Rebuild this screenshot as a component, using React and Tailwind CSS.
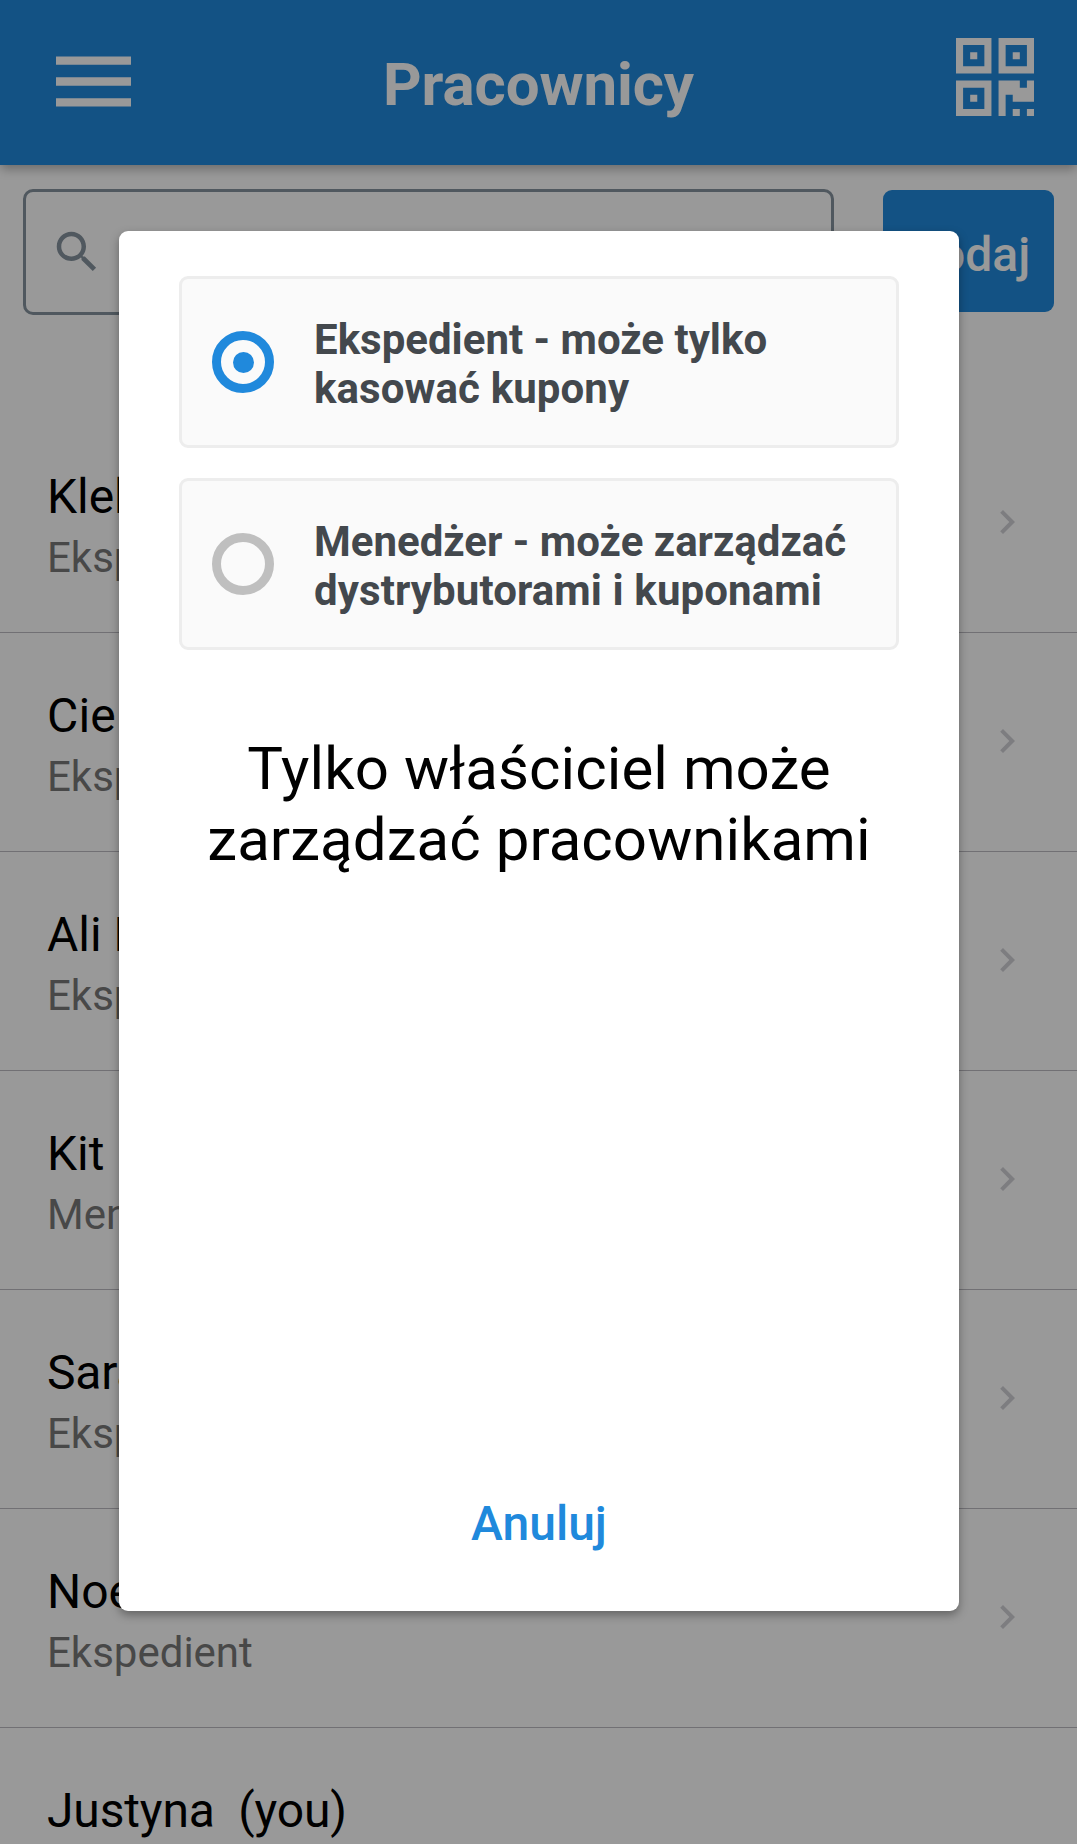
const employees = [
  { name: "Klebek", role: "Ekspedient" },
  { name: "Cielak", role: "Ekspedient", spacing: "tracking-[0.2px]" },
  { name: "Ali Baba", role: "Ekspedient" },
  { name: "Kit", role: "Menedżer" },
  { name: "Sara", role: "Ekspedient", spacing: "tracking-[-0.2px]" },
  { name: "Noe", role: "Ekspedient" },
  { name: "Justyna\u00a0 (you)", role: "\u00a0", own: true, spacing: "tracking-[-0.15px]" },
];

const options = [
  { lines: ["Ekspedient - może tylko", "kasować kupony"], checked: true },
  { lines: ["Menedżer - może zarządzać", "dystrybutorami i kuponami"], checked: false },
];

function MenuIcon() {
  return (
    <svg viewBox="-0.12 0.12 24 24" className="size-[100px] fill-white">
      <path d="M3 18h18v-2H3v2zm0-5h18v-2H3v2zm0-7v2h18V6H3z" />
    </svg>
  );
}

function QrIcon() {
  return (
    <svg viewBox="0 0 11 11" className="size-[78px] fill-white" fillRule="evenodd">
      <path d="M0 0h5v5H0zM1 1v3h3V1zM2 2h1v1H2z" />
      <path d="M6 0h5v5H6zM7 1v3h3V1zM8 2h1v1H8z" />
      <path d="M0 6h5v5H0zM1 7v3h3V7zM2 8h1v1H2z" />
      <path d="M6 6h3v1h1V6h1v3H8V8H7v3H6zM8 10h1v1H8zM10 10h1v1h-1z" />
    </svg>
  );
}

function SearchIcon() {
  return (
    <svg viewBox="0 0 24 24" className="size-[54px] fill-[#86939e]">
      <path d="M15.5 14h-.79l-.28-.27C15.41 12.59 16 11.11 16 9.5 16 5.91 13.09 3 9.5 3S3 5.91 3 9.5 5.91 16 9.5 16c1.61 0 3.09-.59 4.23-1.57l.27.28v.79l5 4.99L20.49 19l-4.99-5zm-6 0C7.01 14 5 11.99 5 9.5S7.01 5 9.5 5 14 7.01 14 9.5 11.99 14 9.5 14z" />
    </svg>
  );
}

function ChevronIcon() {
  return (
    <svg viewBox="0 0 24 24" className="mb-0.5 size-12 fill-[#d1d1d6]">
      <path d="M10 6L8.59 7.41 13.17 12l-4.58 4.59L10 18l6-6z" />
    </svg>
  );
}

function Radio({ checked }) {
  return checked ? (
    <span className="flex size-[62px] shrink-0 items-center justify-center rounded-full border-[9px] border-[#2089dc]">
      <span className="size-[21px] rounded-full bg-[#2089dc]" />
    </span>
  ) : (
    <span className="size-[62px] shrink-0 rounded-full border-[9px] border-[#bfbfbf]" />
  );
}

export default function App() {
  return (
    <div className="relative h-[1844px] w-[1077px] overflow-hidden bg-white font-['Roboto',sans-serif] text-black">
      <header className="relative flex h-[165px] items-start justify-between bg-[#2089dc] px-[43px] shadow-[0_5px_10px_-1px_rgba(0,0,0,0.3)]">
        <div className="flex w-[100px] pt-8"><MenuIcon /></div>
        <h1 className="pt-[49px] text-[60px] leading-[71px] font-bold tracking-[-0.1px] text-white">Pracownicy</h1>
        <div className="flex w-[100px] justify-end pt-[38px]"><QrIcon /></div>
      </header>

      <div className="flex h-[249px] items-start justify-between px-[23px] pt-6">
        <div className="flex h-[126px] w-[811px] items-center rounded-[10px] border-[3px] border-[#86939e] pl-6">
          <SearchIcon />
        </div>
        <button className="mt-px h-[122px] w-[171px] rounded-[9px] bg-[#2089dc] pt-[7px] text-[48px] leading-[56px] font-medium text-white">
          Dodaj
        </button>
      </div>

      <ul>
        {employees.map((e) => (
          <li key={e.name} className="flex h-[219px] items-center justify-between border-b border-[#bcbbc1] pr-[46px] pl-[47px]">
            <div className="pt-1">
              <div className={`text-[48px] leading-[56px] ${e.spacing ?? ""}`}>{e.name}</div>
              <div className="mt-2 text-[42px] leading-[49px] text-[#787878]">{e.role}</div>
            </div>
            {!e.own && <ChevronIcon />}
          </li>
        ))}
      </ul>

      <div className="absolute inset-0 flex items-start justify-center bg-black/40 pt-[231px]">
        <div className="mr-[-1px] flex h-[1380px] w-[840px] flex-col items-center rounded-[9px] bg-white px-[60px] pt-[45px] shadow-[0_4px_10px_rgba(0,0,0,0.35)]">
          <div className="flex w-full flex-col gap-[30px]">
            {options.map((o) => (
              <div key={o.lines[0]} className="flex h-[172px] items-center rounded-[9px] border-[3px] border-[#ededed] bg-[#fafafa] pl-[30px]">
                <Radio checked={o.checked} />
                <div className="ml-10 pt-[3px] text-[42px] leading-[49px] font-bold whitespace-nowrap text-[#43484d]">
                  <div>{o.lines[0]}</div>
                  <div className="tracking-[0.1px]">{o.lines[1]}</div>
                </div>
              </div>
            ))}
          </div>
          <p className="mt-[83px] text-center text-[60px] leading-[71px] tracking-[0.07px]">
            Tylko właściciel może<br />zarządzać pracownikami
          </p>
          <button className="mt-auto mb-[59px] text-[48px] leading-[56px] font-medium text-[#2089dc]">Anuluj</button>
        </div>
      </div>
    </div>
  );
}
